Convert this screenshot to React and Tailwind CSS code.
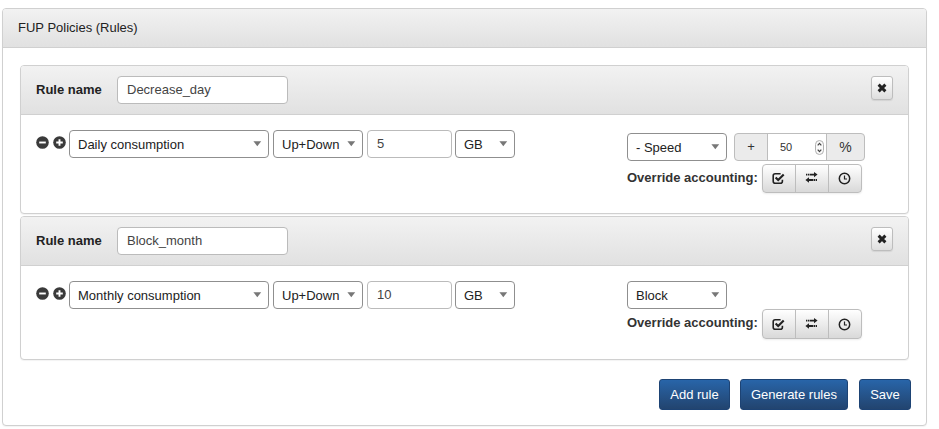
import React from 'react';

function Caret() {
  return (
    <svg className="w-[9px] h-[6px] shrink-0" viewBox="0 0 9 6">
      <path d="M0.4 0.3H8.2L4.3 5.2Z" fill="#777" />
    </svg>
  );
}

function Select({ width, children }) {
  return (
    <button className={`${width} h-[28px] shrink-0 flex items-center justify-between rounded-[4px] border border-[#8f8f8f] bg-white pl-2 pr-[6px] text-left text-[#222] whitespace-nowrap`}>
      <span className="pt-px">{children}</span>
      <Caret />
    </button>
  );
}

function CircleIcon({ plus }) {
  return (
    <svg className="w-[13px] h-[13px] shrink-0" viewBox="0 0 13 13">
      <circle cx="6.5" cy="6.5" r="6.3" fill="#3a3a3a" />
      <path d={plus ? 'M3.2 6.5H9.8M6.5 3.2V9.8' : 'M3.2 6.5H9.8'} stroke="#fff" strokeWidth="1.9" />
    </svg>
  );
}

function CheckIcon() {
  return (
    <svg className="w-[13px] h-[13px]" viewBox="0 0 13 13" fill="none" stroke="#222">
      <path d="M8.6 1.8H3.2Q1.2 1.8 1.2 3.8V9.2Q1.2 11.2 3.2 11.2H8.4Q10.4 11.2 10.4 9.2V7.8" strokeWidth="1.6" />
      <path d="M3.6 5.4L6.2 8L11.7 2.5" strokeWidth="2.1" />
    </svg>
  );
}

function TransferIcon() {
  return (
    <svg className="w-[13px] h-[13px]" viewBox="0 0 13 13" fill="#222">
      <path d="M1 2.7H2.2V4.5H1ZM2.8 2.7H4V4.5H2.8ZM4.5 2.7H9V0.9L12.6 3.6L9 6.3V4.5H4.5Z" />
      <path d="M12 8.1H10.8V9.9H12ZM10.2 8.1H9V9.9H10.2ZM8.5 8.1H4V6.3L0.4 9L4 11.7V9.9H8.5Z" />
    </svg>
  );
}

function ClockIcon() {
  return (
    <svg className="w-[13px] h-[13px]" viewBox="0 0 13 13" fill="none" stroke="#222">
      <circle cx="6.5" cy="6.5" r="5.2" strokeWidth="1.5" />
      <path d="M6.5 3.6V7H9" strokeWidth="1.2" />
    </svg>
  );
}

function IconGroup({ height }) {
  return (
    <div className={`${height} w-[100px] flex rounded-[4px] border border-[#bdbdbd] bg-linear-to-b from-white to-[#d9d9d9] shadow-[0_1px_2px_rgba(0,0,0,0.08)]`}>
      <button className="w-[33px] flex items-center justify-center border-r border-[#bdbdbd] pr-px"><CheckIcon /></button>
      <button className="w-[33px] flex items-center justify-center border-r border-[#bdbdbd] pb-[2px] pr-[2px]"><TransferIcon /></button>
      <button className="w-[32px] flex items-center justify-center pr-[2px]"><ClockIcon /></button>
    </div>
  );
}

function SpeedInput() {
  return (
    <div className="ml-[7px] w-[131px] h-[28px] flex rounded-[4px] border border-[#bdbdbd] bg-[#ebebeb] text-[#333]">
      <span className="w-[32px] flex items-center justify-center text-[13px]">+</span>
      <div className="w-[60px] flex items-center justify-between border-x border-[#bdbdbd] bg-white pl-3 pr-[2px] text-[11px]">
        <span>50</span>
        <svg className="w-[9px] h-[15px]" viewBox="0 0 9 15" fill="none">
          <rect x="0.5" y="0.5" width="8" height="14" rx="4" stroke="#b0b0b0" fill="#fafafa" />
          <path d="M2.7 5.4L4.5 3.4L6.3 5.4M2.7 9.6L4.5 11.6L6.3 9.6" stroke="#444" strokeWidth="1.2" />
        </svg>
      </div>
      <span className="flex-1 flex items-center justify-center text-[14px]">%</span>
    </div>
  );
}

function Rule({ name, metric, amount, action, speed, height, rightPad, labelPad, groupHeight, groupGap }) {
  return (
    <section className={`${height} rounded-[4px] border border-[#d0d0d0] bg-white shadow-[0_1px_1px_rgba(0,0,0,0.05)]`}>
      <div className="h-[49px] flex items-start rounded-t-[3px] border-b border-[#d0d0d0] bg-linear-to-b from-[#f2f2f2] to-[#e1e1e1] pl-[15px] pr-[15px] pt-[10px]">
        <label className="w-[81px] h-[28px] leading-[28px] font-bold text-[#222]">Rule name</label>
        <div className="w-[171px] h-[28px] rounded-[4px] border border-[#bbb] bg-white pl-[9px] leading-[26px] text-[#444]">{name}</div>
        <button className="ml-auto w-[22px] h-[24px] flex items-center justify-center rounded-[3px] border border-[#bdbdbd] bg-linear-to-b from-white to-[#dedede] shadow-[0_1px_1px_rgba(0,0,0,0.08)]">
          <svg className="w-[10px] h-[10px]" viewBox="0 0 10 10">
            <path d="M1.6 1.6L8.4 8.4M8.4 1.6L1.6 8.4" stroke="#222" strokeWidth="2.9" />
          </svg>
        </button>
      </div>
      <div className="flex items-start pl-[15px]">
        <div className="w-[591px] flex items-start pt-[15px]">
          <div className="w-[33px] flex gap-[4px] pt-[6px]">
            <CircleIcon />
            <CircleIcon plus />
          </div>
          <Select width="w-[200px]">{metric}</Select>
          <div className="w-[4px]" />
          <Select width="w-[90px]">Up+Down</Select>
          <div className="ml-[4px] mr-[3px] w-[85px] h-[28px] rounded-[4px] border border-[#bbb] bg-white pl-[9px] leading-[25px] text-[#444]">{amount}</div>
          <Select width="w-[60px]">GB</Select>
        </div>
        <div className={rightPad}>
          <div className="flex">
            <Select width="w-[100px]">{action}</Select>
            {speed && <SpeedInput />}
          </div>
          <div className={`flex items-start ${groupGap}`}>
            <span className={`w-[135px] font-bold text-[#333] whitespace-nowrap leading-[20px] ${labelPad}`}>Override accounting:</span>
            <IconGroup height={groupHeight} />
          </div>
        </div>
      </div>
    </section>
  );
}

function PrimaryButton({ width, children }) {
  return (
    <button className={`${width} h-[31px] rounded-[3px] border border-[#1d4374] bg-linear-to-b from-[#2865a9] to-[#22446f] text-white leading-[29px] whitespace-nowrap`}>
      {children}
    </button>
  );
}

export default function App() {
  return (
    <div className="h-[429px] bg-white pl-[2px] pr-[12px] pt-[8px] text-[13px] font-['Liberation_Sans',Arial,sans-serif]">
      <main className="h-[418px] rounded-[4px] border border-[#d0d0d0] bg-white shadow-[0_1px_1px_rgba(0,0,0,0.05)]">
        <h1 className="h-[39px] rounded-t-[3px] border-b border-[#d0d0d0] bg-linear-to-b from-[#f2f2f2] to-[#e1e1e1] pl-[15px] leading-[38px] text-[#222]">FUP Policies (Rules)</h1>
        <div className="pl-[17px] pr-[17px] pt-[17px]">
          <div className="flex flex-col gap-[2px]">
            <Rule name="Decrease_day" metric="Daily consumption" amount="5" action="- Speed" speed height="h-[149px]" rightPad="pt-[18px]" labelPad="pt-[4px]" groupHeight="h-[29px]" groupGap="mt-[3px]" />
            <Rule name="Block_month" metric="Monthly consumption" amount="10" action="Block" height="h-[144px]" rightPad="pt-[15px]" labelPad="pt-[4px]" groupHeight="h-[30px]" groupGap="mt-0" />
          </div>
          <div className="mt-[19px] -mr-[2px] flex justify-end">
            <PrimaryButton width="w-[71px]">Add rule</PrimaryButton>
            <PrimaryButton width="w-[108px] ml-[10px]">Generate rules</PrimaryButton>
            <PrimaryButton width="w-[52px] ml-[11px]">Save</PrimaryButton>
          </div>
        </div>
      </main>
    </div>
  );
}
